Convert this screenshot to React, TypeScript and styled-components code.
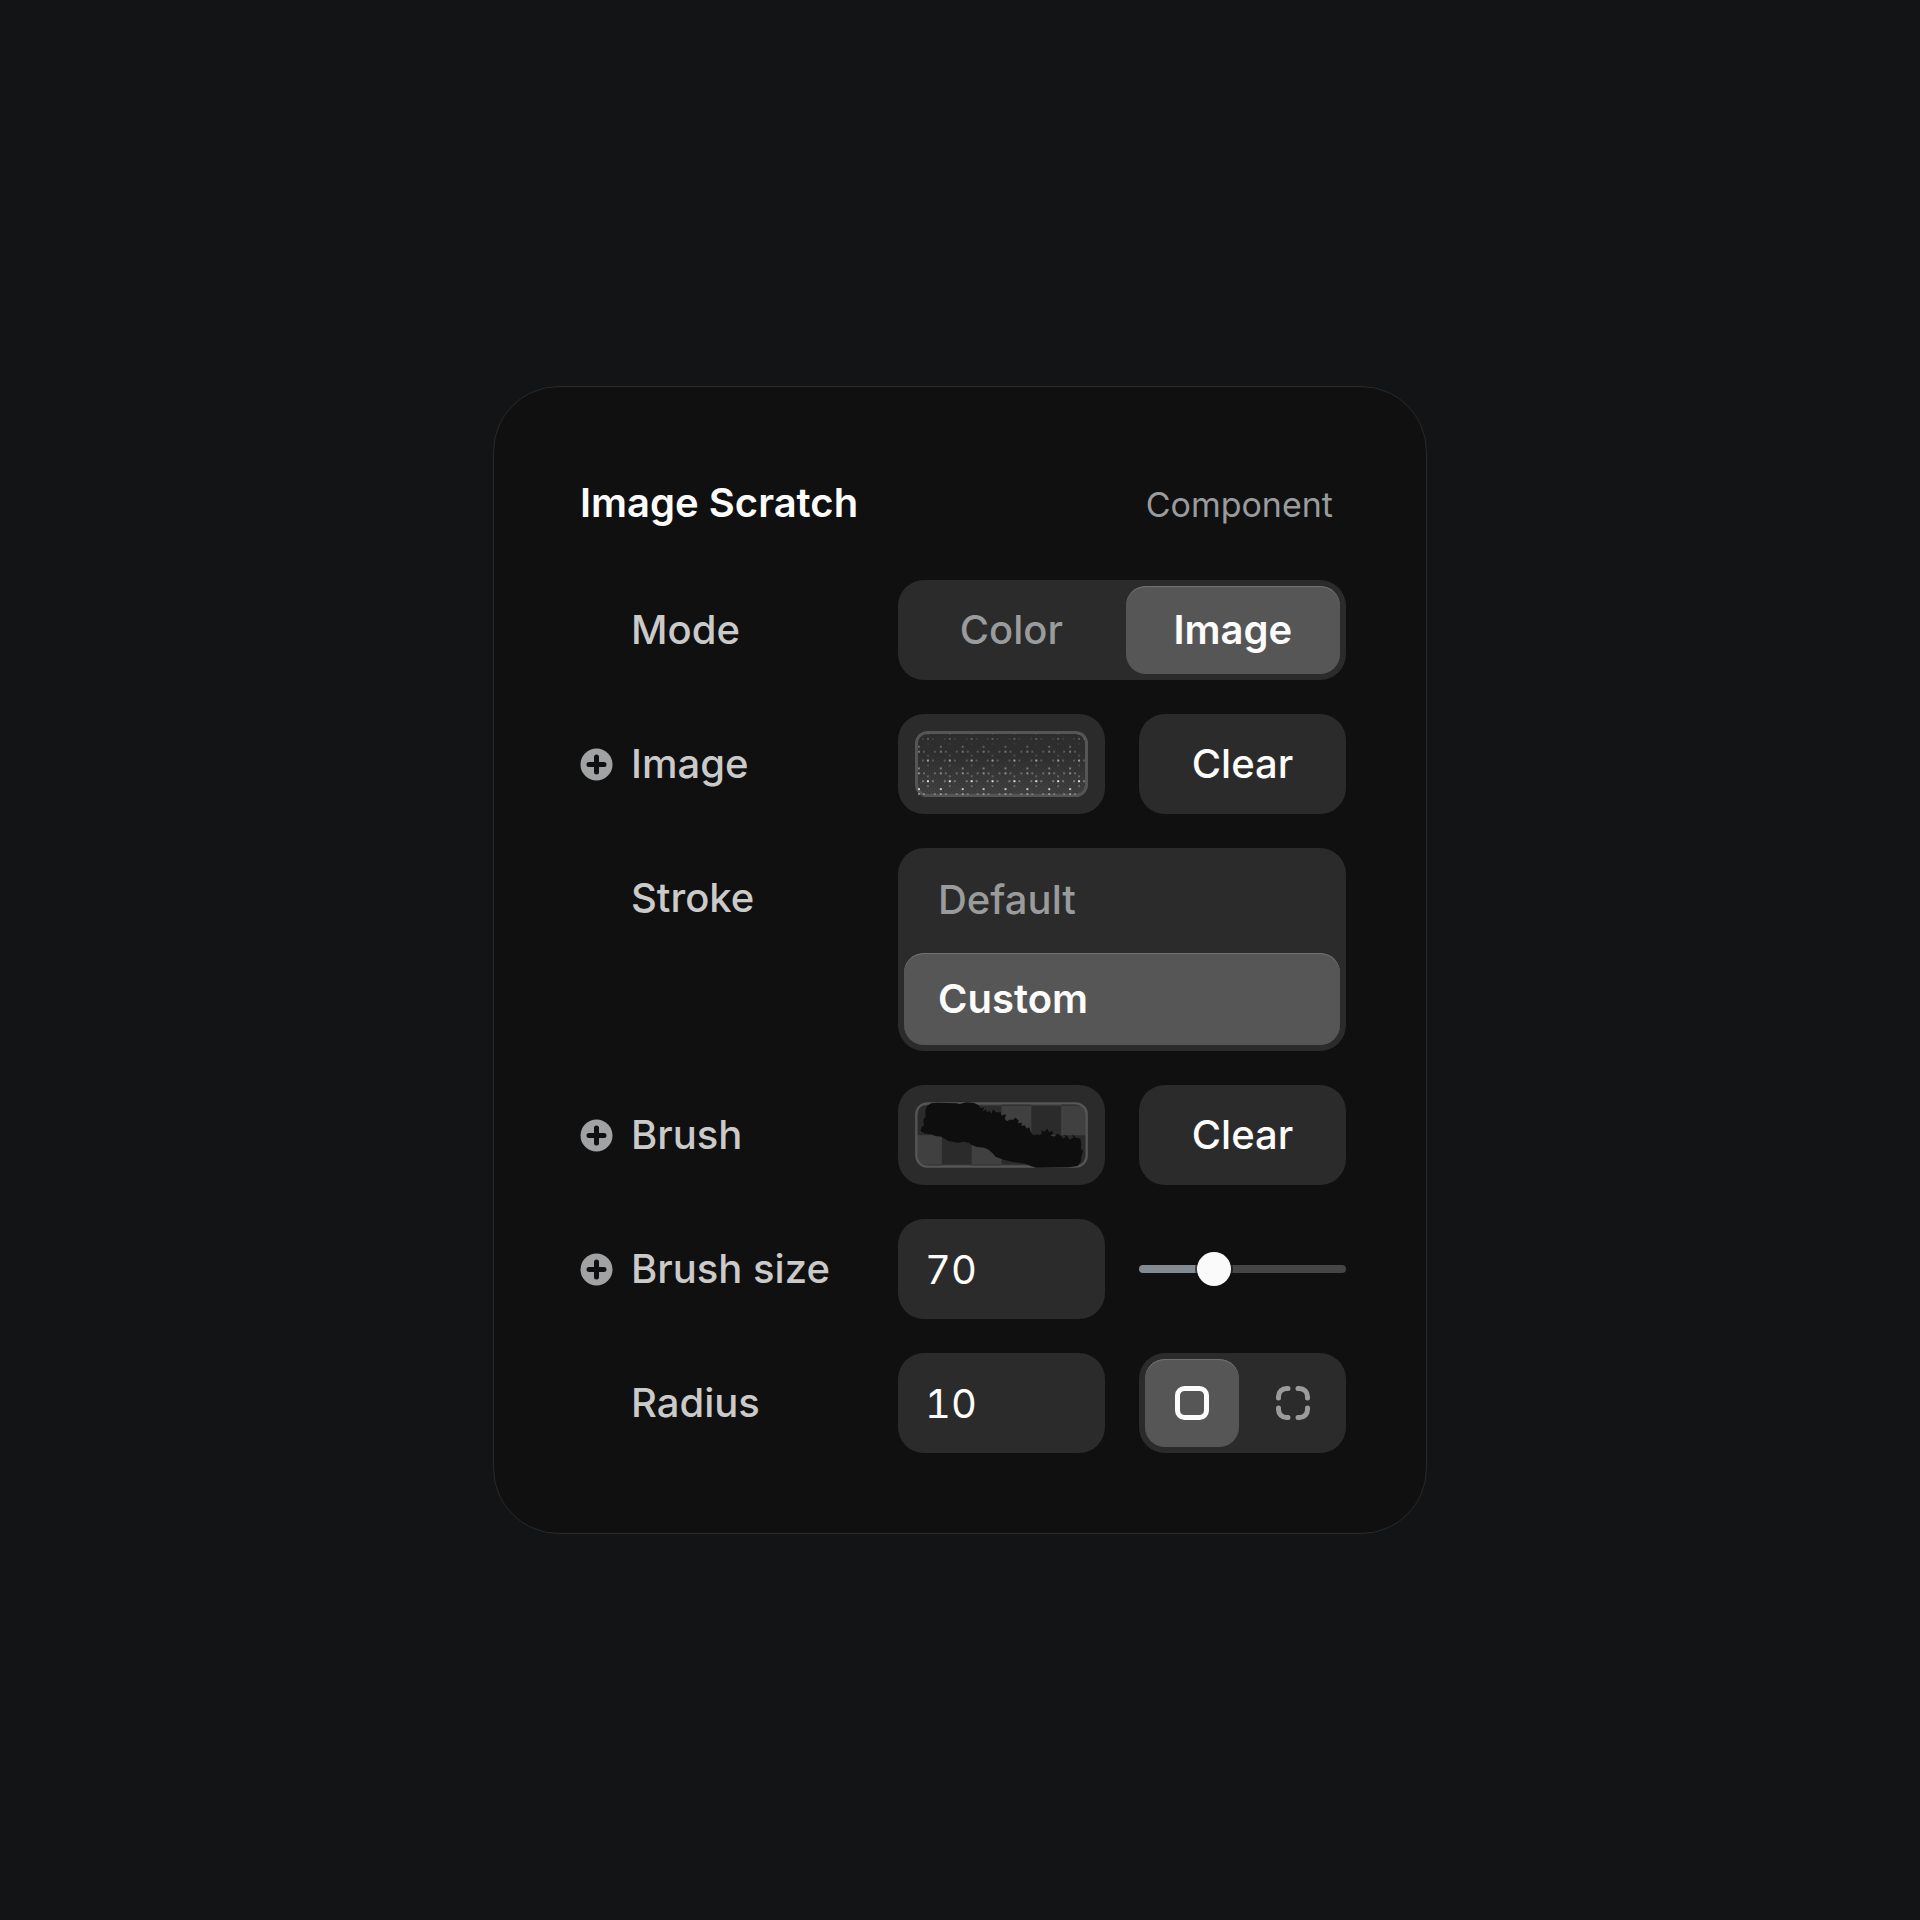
import React, { useId, useState } from "react";
import styled, { createGlobalStyle, css } from "styled-components";

const color = {
  page: "#131416",
  card: "#101010",
  line: "#2a2a2a",
  field: "#2b2b2b",
  active: "#565656",
  activeEdge: "#707070",
  title: "#fcfcfc",
  label: "#cacaca",
  muted: "#999b9d",
};

const GlobalStyle = createGlobalStyle`
  *, *::before, *::after { box-sizing: border-box; }
  body {
    margin: 0;
    background: ${color.page};
    color: ${color.title};
    font-family: Inter, "Liberation Sans", sans-serif;
    font-size: 40px;
    line-height: 48px;
  }
  button, input { font: inherit; color: inherit; }
`;

const Page = styled.main`
  min-height: 100vh;
  display: flex;
  align-items: center;
  justify-content: center;
`;

const Card = styled.section`
  width: 100%;
  max-width: 934px;
  padding: 92px 80px 80px 86px;
  background: ${color.card};
  border: 1px solid ${color.line};
  border-radius: 66px;
`;

const Header = styled.header`
  display: flex;
  align-items: baseline;
  justify-content: space-between;
  margin-bottom: 53px;
  padding-right: 13px;
`;

const Title = styled.h1`
  margin: 0;
  font-size: 40px;
  font-weight: 600;
`;

const Kind = styled.span`
  font-size: 34px;
  line-height: 40px;
  color: ${color.muted};
`;

const Rows = styled.div`
  display: grid;
  gap: 34px;
`;

const Row = styled.div`
  display: grid;
  grid-template-columns: minmax(0, 1fr) minmax(0, 448px);
  align-items: start;
`;

const LabelCell = styled.div`
  display: grid;
  grid-template-columns: 33px auto;
  column-gap: 18px;
  align-items: center;
  justify-content: start;
  height: 100px;
  color: ${color.label};
  font-weight: 500;

  & > :last-child { grid-column: 2; }
`;

const PlusButton = styled.button`
  display: flex;
  padding: 0;
  border: 0;
  background: none;
  cursor: pointer;
`;

const Pair = styled.div`
  display: grid;
  grid-template-columns: 1fr 1fr;
  gap: 34px;
  align-items: center;
`;

const fieldBox = css`
  width: 100%;
  height: 100px;
  border: 0;
  border-radius: 26px;
  background: ${color.field};
`;

const ClearButton = styled.button`
  ${fieldBox}
  padding: 0;
  font-weight: 500;
  cursor: pointer;
`;

const ThumbButton = styled.button`
  ${fieldBox}
  display: flex;
  padding: 17px;
  cursor: pointer;

  svg { display: block; width: 100%; height: 100%; }
`;

const NumberField = styled.input`
  ${fieldBox}
  padding: 0 27px;
  outline: none;
  font-variant-numeric: tabular-nums;
`;

const Segments = styled.div<{ $stacked?: boolean }>`
  display: grid;
  grid-template-columns: ${(p) => (p.$stacked ? "1fr" : "1fr 1fr")};
  grid-auto-rows: ${(p) => (p.$stacked ? "92px" : "88px")};
  gap: 7px;
  padding: 6px;
  border-radius: 26px;
  background: ${color.field};
`;

const Segment = styled.label<{ $active: boolean; $start?: boolean }>`
  display: flex;
  align-items: center;
  justify-content: ${(p) => (p.$start ? "flex-start" : "center")};
  padding: 0 ${(p) => (p.$start ? "34px" : "0")};
  border-radius: 20px;
  color: ${(p) => (p.$active ? color.title : color.muted)};
  font-weight: ${(p) => (p.$active ? 600 : 500)};
  background: ${(p) => (p.$active ? color.active : "transparent")};
  box-shadow: ${(p) => (p.$active ? `inset 0 1px 0 ${color.activeEdge}` : "none")};
  cursor: pointer;
`;

const HiddenRadio = styled.input`
  appearance: none;
  width: 0;
  height: 0;
  margin: 0;
`;

const Slider = styled.input<{ $ratio: number }>`
  appearance: none;
  width: 100%;
  height: 34px;
  margin: 0;
  background: none;
  cursor: pointer;

  &::-webkit-slider-runnable-track {
    height: 8px;
    border-radius: 4px;
    background: linear-gradient(
      to right,
      #828b91 calc(17px + (100% - 34px) * ${(p) => p.$ratio}),
      #454545 0
    );
  }

  &::-webkit-slider-thumb {
    appearance: none;
    width: 34px;
    height: 34px;
    margin-top: -13px;
    border: 0;
    border-radius: 50%;
    background: #fafafa;
    box-shadow: 0 0 0 2px rgba(16, 16, 16, 0.6);
  }
`;

const PlusIcon = () => (
  <svg width="33" height="33" viewBox="0 0 33 33" aria-hidden="true">
    <circle cx="16.5" cy="16.5" r="16" fill="#a0a2a4" />
    <path d="M16.5 9v15M9 16.5h15" stroke={color.card} strokeWidth="5" strokeLinecap="round" />
  </svg>
);

const SquareIcon = () => (
  <svg width="34" height="34" viewBox="0 0 34 34" fill="none" aria-hidden="true">
    <rect x="2.5" y="2.5" width="29" height="29" rx="7" stroke="currentColor" strokeWidth="5" />
  </svg>
);

const CornersIcon = () => (
  <svg width="34" height="34" viewBox="0 0 34 34" fill="none" aria-hidden="true">
    <path
      d="M2.5 12v-1.500a8 8 0 0 1 8-8H12M22 2.500h1.500a8 8 0 0 1 8 8V12M31.500 22v1.500a8 8 0 0 1-8 8H22M12 31.500h-1.500a8 8 0 0 1-8-8V22"
      stroke="currentColor"
      strokeWidth="5"
      strokeLinecap="round"
    />
  </svg>
);

type Dot = { x: number; y: number; o: number };

// Halftone stars on two interleaved lattices, brighter towards the bottom.
const halftone: Dot[] = [];
for (let col = 0; col < 8; col++) {
  for (let row = 0; row < 3; row++) {
    const ax = Math.round(12 + col * 21.75);
    const ay = [7, 29, 50][row];
    const a = [0.22, 0.55, 0.85][row];
    halftone.push({ x: ax, y: ay, o: a });
    [-5, 5].forEach((d) => {
      halftone.push({ x: ax + d, y: ay, o: a * 0.38 });
      halftone.push({ x: ax, y: ay + d, o: a * 0.26 });
    });
    const bx = Math.round(3 + col * 21.75);
    const by = [20, 42, 63][row];
    const b = [0.34, 0.45, 0.4][row];
    halftone.push({ x: bx, y: by, o: b });
    halftone.push({ x: bx, y: by - 5, o: [0.26, 0.36, 0.7][row] });
    [-6, 5].forEach((d) => {
      if (bx + d > 2) halftone.push({ x: bx + d, y: by, o: b * 0.6 });
    });
  }
}

const HalftoneThumb = () => (
  <svg viewBox="0 0 174 67" preserveAspectRatio="none" aria-hidden="true">
    <defs>
      <linearGradient id="tone" x1="0" y1="0" x2="0" y2="1">
        <stop offset="0" stopColor="#2d2d2d" />
        <stop offset="0.4" stopColor="#303030" />
        <stop offset="1" stopColor="#424242" />
      </linearGradient>
      <pattern id="grain" width="4" height="4" patternUnits="userSpaceOnUse">
        <path d="M0 0h1v1H0zM2 2h1v1H2z" fill="#222" fillOpacity="0.5" />
      </pattern>
    </defs>
    <rect x="1" y="1" width="172" height="65" rx="11" fill="url(#tone)" />
    <rect x="1" y="1" width="172" height="65" rx="11" fill="url(#grain)" />
    <rect x="1.5" y="1.5" width="171" height="64" rx="11" fill="none" stroke="#555" strokeWidth="3" />
    {halftone.map((d, i) => (
      <rect key={i} x={d.x} y={d.y} width="2" height="2" fill="#fff" opacity={d.o} />
    ))}
  </svg>
);

const BrushThumb = () => (
  <svg viewBox="75 95 522 201" preserveAspectRatio="none" aria-hidden="true">
    <defs>
      <pattern id="checker" x="66" y="106" width="180" height="180" patternUnits="userSpaceOnUse">
        <rect width="180" height="180" fill="#2b2b2b" />
        <path d="M90 0h90v90H90zM0 90h90v90H0z" fill="#404040" />
      </pattern>
    </defs>
    <rect x="78" y="98" width="516" height="195" rx="33" fill="url(#checker)" />
    <rect x="79" y="99" width="514" height="193" rx="33" fill="none" stroke="#555" strokeWidth="7" />
    <path
      fill="#0e0e0e"
      d="M110 108L124 99 140 97 200 99 210 101 230 96 254 98 268 106 272 113 284 112 278 124 288 118 293 126 300 122 306 131 310 118 320 126 334 126 335 136 350 132 346 146 352 154 362 148 370 150 378 143 388 151 386 160 398 158 396 168 406 166 412 176 420 172 424 186 432 196 444 194 452 196 458 190 456 180 466 186 474 176 480 188 488 182 492 190 484 198 496 200 504 192 516 198 522 206 530 202 524 193 536 200 540 210 552 204 550 193 560 204 574 206 577 226 575 236 582 244 577 262 575 276 566 290 540 294 440 295 424 290 410 284 390 280 370 278 340 270 318 262 310 252 296 240 284 234 262 232 246 226 238 220 222 216 204 220 190 216 176 214 164 206 152 200 138 199 124 193 104 191 92 183 94 172 102 166 100 150 107 140 106 122Z"
    />
  </svg>
);

type Option = { value: string; content: React.ReactNode; aria?: string };

function SegmentGroup({
  labelledBy,
  options,
  initial,
  stacked,
}: {
  labelledBy: string;
  options: Option[];
  initial: string;
  stacked?: boolean;
}) {
  const name = useId();
  const [value, setValue] = useState(initial);
  return (
    <Segments role="radiogroup" aria-labelledby={labelledBy} $stacked={stacked}>
      {options.map((o) => (
        <Segment key={o.value} $active={o.value === value} $start={stacked}>
          <HiddenRadio
            type="radio"
            name={name}
            value={o.value}
            aria-label={o.aria}
            checked={o.value === value}
            onChange={() => setValue(o.value)}
          />
          {o.content}
        </Segment>
      ))}
    </Segments>
  );
}

const AddButton = ({ name }: { name: string }) => (
  <PlusButton type="button" aria-label={`Add ${name} variable`}>
    <PlusIcon />
  </PlusButton>
);

const MAX_BRUSH = 210;

export default function App() {
  const [size, setSize] = useState(70);
  const [radius, setRadius] = useState("10");

  return (
    <>
      <GlobalStyle />
      <Page>
        <Card>
          <Header>
            <Title>Image Scratch</Title>
            <Kind>Component</Kind>
          </Header>
          <Rows>
            <Row>
              <LabelCell>
                <span id="mode">Mode</span>
              </LabelCell>
              <SegmentGroup
                labelledBy="mode"
                initial="image"
                options={[
                  { value: "color", content: "Color" },
                  { value: "image", content: "Image" },
                ]}
              />
            </Row>
            <Row>
              <LabelCell>
                <AddButton name="image" />
                <label htmlFor="image">Image</label>
              </LabelCell>
              <Pair>
                <ThumbButton id="image" type="button">
                  <HalftoneThumb />
                </ThumbButton>
                <ClearButton type="button">Clear</ClearButton>
              </Pair>
            </Row>
            <Row>
              <LabelCell>
                <span id="stroke">Stroke</span>
              </LabelCell>
              <SegmentGroup
                stacked
                labelledBy="stroke"
                initial="custom"
                options={[
                  { value: "default", content: "Default" },
                  { value: "custom", content: "Custom" },
                ]}
              />
            </Row>
            <Row>
              <LabelCell>
                <AddButton name="brush" />
                <label htmlFor="brush">Brush</label>
              </LabelCell>
              <Pair>
                <ThumbButton id="brush" type="button">
                  <BrushThumb />
                </ThumbButton>
                <ClearButton type="button">Clear</ClearButton>
              </Pair>
            </Row>
            <Row>
              <LabelCell>
                <AddButton name="brush size" />
                <label htmlFor="size">Brush size</label>
              </LabelCell>
              <Pair>
                <NumberField
                  id="size"
                  inputMode="numeric"
                  value={size}
                  onChange={(e) => setSize(Math.min(MAX_BRUSH, Number(e.target.value) || 0))}
                />
                <Slider
                  type="range"
                  aria-label="Brush size"
                  min={0}
                  max={MAX_BRUSH}
                  value={size}
                  $ratio={size / MAX_BRUSH}
                  onChange={(e) => setSize(Number(e.target.value))}
                />
              </Pair>
            </Row>
            <Row>
              <LabelCell>
                <label id="radius-label" htmlFor="radius">
                  Radius
                </label>
              </LabelCell>
              <Pair>
                <NumberField
                  id="radius"
                  inputMode="numeric"
                  value={radius}
                  onChange={(e) => setRadius(e.target.value)}
                />
                <SegmentGroup
                  labelledBy="radius-label"
                  initial="all"
                  options={[
                    { value: "all", content: <SquareIcon />, aria: "All corners" },
                    { value: "each", content: <CornersIcon />, aria: "Each corner" },
                  ]}
                />
              </Pair>
            </Row>
          </Rows>
        </Card>
      </Page>
    </>
  );
}
